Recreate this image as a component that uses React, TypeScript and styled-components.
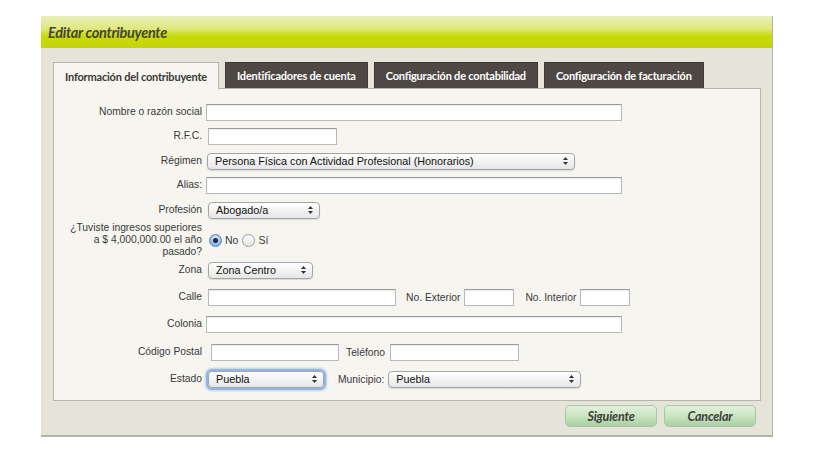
import styled, { createGlobalStyle } from 'styled-components'

const GlobalStyle = createGlobalStyle`
  body {
    margin: 0;
    background: #ffffff;
    font-family: "Liberation Sans", Arial, sans-serif;
  }
`

const Page = styled.div`
  padding: 16px 0 0 41px;
`

const Frame = styled.div`
  width: 732px;
  height: 421px;
  box-sizing: border-box;
  background: #e6e4d9;
  border-right: 1px solid #b2b2ad;
  border-bottom: 2px solid #b2b2ad;
  display: flex;
  flex-direction: column;
`

const Header = styled.div`
  height: 32px;
  flex: none;
  display: flex;
  align-items: center;
  padding-left: 7px;
  background: linear-gradient(#ebf0bd 0%, #dde87c 40%, #c8da0c 62%, #c3d500 100%);
`

const Title = styled.h1`
  margin: 0;
  font-family: Lato, "Open Sans", sans-serif;
  font-style: italic;
  font-weight: 700;
  font-size: 14.5px;
  letter-spacing: -0.3px;
  color: #45453a;
`

const Body = styled.div`
  padding: 14px 11px 0 12px;
`

const Tabs = styled.div`
  display: flex;
  gap: 6px;
  height: 26px;
  position: relative;
  z-index: 1;
`

const Tab = styled.div<{ $active?: boolean }>`
  display: flex;
  align-items: center;
  padding: 0 11px;
  box-sizing: border-box;
  height: ${(p) => (p.$active ? '27px' : '26px')};
  font-family: Lato, "Open Sans", sans-serif;
  font-weight: 700;
  font-size: 11px;
  letter-spacing: -0.2px;
  white-space: nowrap;
  background: ${(p) => (p.$active ? '#f6f5ef' : '#4e4845')};
  color: ${(p) => (p.$active ? '#3a3834' : '#ffffff')};
  border: 1px solid ${(p) => (p.$active ? '#b6b6b1' : '#3e3936')};
  border-bottom: none;
`

const Panel = styled.div`
  background: #f6f5ef;
  border: 1px solid #b6b6b1;
  padding: 11px 0 8px 0;
`

const Row = styled.div<{ $h: number }>`
  display: flex;
  align-items: center;
  height: ${(p) => p.$h}px;
`

const Label = styled.label`
  width: 148px;
  flex: none;
  text-align: right;
  font-size: 10.3px;
  line-height: 12px;
  color: #3a3a3a;
  margin-right: 5px;
`

const InlineLabel = styled.label<{ $ml: number; $mr: number }>`
  font-size: 10.3px;
  color: #3a3a3a;
  margin-left: ${(p) => p.$ml}px;
  margin-right: ${(p) => p.$mr}px;
  white-space: nowrap;
`

const Input = styled.input<{ $w: number; $ml?: number }>`
  width: ${(p) => p.$w}px;
  height: 17px;
  box-sizing: border-box;
  margin: 0 0 0 ${(p) => p.$ml ?? 0}px;
  padding: 0 3px;
  background: #ffffff;
  border: 1px solid #b9b9b9;
  border-top-color: #9c9c9c;
  box-shadow: inset 0 1px 1px rgba(0, 0, 0, 0.08);
  outline: none;
`

const SelectBox = styled.div<{ $w: number; $ml?: number; $focus?: boolean }>`
  width: ${(p) => p.$w}px;
  height: 17px;
  box-sizing: border-box;
  margin-left: ${(p) => p.$ml ?? 0}px;
  display: flex;
  align-items: center;
  justify-content: space-between;
  padding: 0 6px 0 7px;
  border: 1px solid #a4a4a4;
  border-radius: 4px;
  background: linear-gradient(#ffffff, #f1f1f1 55%, #e6e6e6);
  box-shadow: ${(p) =>
    p.$focus ? '0 0 0 2px #8fb6e6, 0 0 2px 3px rgba(120, 165, 225, 0.45)' : '0 1px 1px rgba(0, 0, 0, 0.12)'};
  font-size: 10.8px;
  color: #111111;
  white-space: nowrap;
`

const Arrows = () => (
  <svg width="5" height="8" viewBox="0 0 5 8">
    <path d="M2.5 0 L5 3 L0 3 Z" fill="#333" />
    <path d="M2.5 8 L5 5 L0 5 Z" fill="#333" />
  </svg>
)

const Select = (props: { value: string; w: number; ml?: number; focus?: boolean }) => (
  <SelectBox $w={props.w} $ml={props.ml} $focus={props.focus}>
    <span>{props.value}</span>
    <Arrows />
  </SelectBox>
)

const Radio = styled.span<{ $checked?: boolean }>`
  width: 13px;
  height: 13px;
  box-sizing: border-box;
  border-radius: 50%;
  display: inline-flex;
  align-items: center;
  justify-content: center;
  border: 1px solid ${(p) => (p.$checked ? '#5d80b8' : '#9d9d9d')};
  background: ${(p) =>
    p.$checked
      ? 'radial-gradient(circle at 50% 30%, #d6e8fb, #8fb8ea 70%, #6a9ad6)'
      : 'linear-gradient(#ffffff, #e4e4e4)'};
  &::after {
    content: '';
    width: 5px;
    height: 5px;
    border-radius: 50%;
    background: #1f2a3a;
    display: ${(p) => (p.$checked ? 'block' : 'none')};
  }
`

const RadioText = styled.span`
  font-size: 10.5px;
  color: #3a3a3a;
  margin: 0 4px 0 3px;
`

const Footer = styled.div`
  display: flex;
  justify-content: flex-end;
  gap: 7px;
  padding: 4px 5px 0 0;
`

const Button = styled.button`
  width: 92px;
  height: 22px;
  border: 1px solid #a9c7a4;
  border-radius: 5px;
  background: linear-gradient(#e2f2dc, #c9e4c2 50%, #a8d0a6);
  font-family: Lato, "Open Sans", sans-serif;
  font-style: italic;
  font-weight: 700;
  font-size: 12.5px;
  letter-spacing: -0.2px;
  color: #3c4038;
  padding: 0;
`

export default function App() {
  return (
    <Page>
      <GlobalStyle />
      <Frame>
        <Header>
          <Title>Editar contribuyente</Title>
        </Header>
        <Body>
          <Tabs>
            <Tab $active>Información del contribuyente</Tab>
            <Tab>Identificadores de cuenta</Tab>
            <Tab>Configuración de contabilidad</Tab>
            <Tab>Configuración de facturación</Tab>
          </Tabs>
          <Panel>
            <Row $h={24}>
              <Label>Nombre o razón social</Label>
              <Input $w={416} $ml={-1} />
            </Row>
            <Row $h={24}>
              <Label>R.F.C.</Label>
              <Input $w={129} $ml={1} />
            </Row>
            <Row $h={26}>
              <Label>Régimen</Label>
              <Select w={368} value="Persona Física con Actividad Profesional (Honorarios)" />
            </Row>
            <Row $h={22}>
              <Label>Alias:</Label>
              <Input $w={416} $ml={-1} />
            </Row>
            <Row $h={28}>
              <Label>Profesión</Label>
              <Select w={112} ml={1} value="Abogado/a" />
            </Row>
            <Row $h={32}>
              <Label>
                ¿Tuviste ingresos superiores
                <br />a $ 4,000,000.00 el año
                <br />
                pasado?
              </Label>
              <Radio $checked style={{ marginLeft: 2 }} />
              <RadioText>No</RadioText>
              <Radio />
              <RadioText>Sí</RadioText>
            </Row>
            <Row $h={28}>
              <Label>Zona</Label>
              <Select w={105} ml={1} value="Zona Centro" />
            </Row>
            <Row $h={26}>
              <Label>Calle</Label>
              <Input $w={188} $ml={1} />
              <InlineLabel $ml={10} $mr={4}>
                No. Exterior
              </InlineLabel>
              <Input $w={50} />
              <InlineLabel $ml={11} $mr={4}>
                No. Interior
              </InlineLabel>
              <Input $w={50} />
            </Row>
            <Row $h={28}>
              <Label>Colonia</Label>
              <Input $w={416} $ml={-1} />
            </Row>
            <Row $h={28}>
              <Label>Código Postal</Label>
              <Input $w={128} $ml={4} />
              <InlineLabel $ml={7} $mr={5}>
                Teléfono
              </InlineLabel>
              <Input $w={129} />
            </Row>
            <Row $h={26}>
              <Label>Estado</Label>
              <Select w={116} ml={1} focus value="Puebla" />
              <InlineLabel $ml={14} $mr={4}>
                Municipio:
              </InlineLabel>
              <Select w={193} value="Puebla" />
            </Row>
          </Panel>
          <Footer>
            <Button>Siguiente</Button>
            <Button>Cancelar</Button>
          </Footer>
        </Body>
      </Frame>
    </Page>
  )
}
